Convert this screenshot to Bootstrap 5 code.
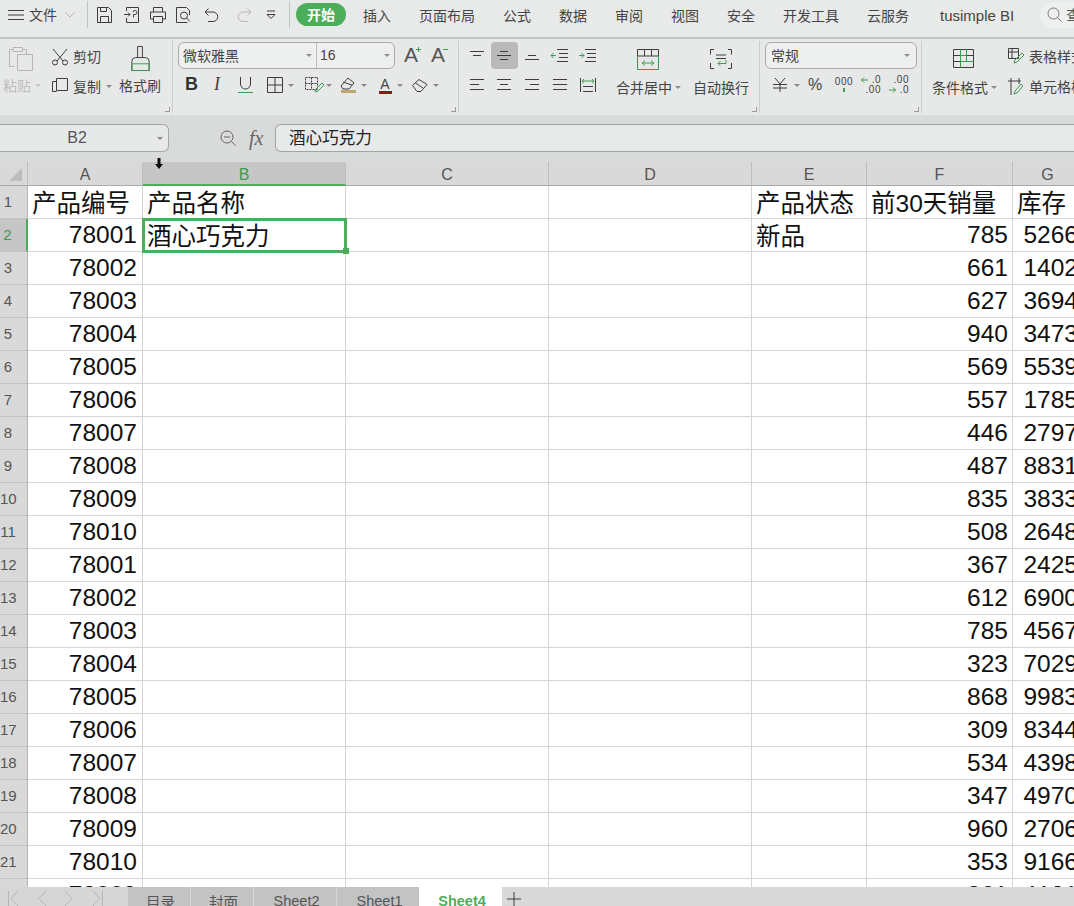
<!DOCTYPE html>
<html lang="zh-CN">
<head>
<meta charset="utf-8">
<title>WPS 表格</title>
<link href="https://cdn.jsdelivr.net/npm/bootstrap@5.3.0/dist/css/bootstrap.min.css" rel="stylesheet">
<style>
html,body{width:1074px;height:906px;overflow:hidden;margin:0}
body{background:#d9dada;color:#444;font-family:"Liberation Sans","Noto Sans CJK SC",sans-serif;font-size:14px;line-height:1.2}
.zh{font-family:"Noto Sans CJK SC","Liberation Sans",sans-serif}
svg{display:block;flex:none;overflow:visible}
svg .s{fill:none;stroke:#3d3d3d;stroke-width:1}
svg .g{fill:none;stroke:#3f9a52;stroke-width:1}
svg .l{fill:none;stroke:#b5b5b5;stroke-width:1}
.app{position:relative;width:1074px;height:906px}
.topbar{height:37px;background:#e8eaea;flex:none;padding-bottom:8px;overflow:hidden}
.topbar>*{flex:none}
.tb-rule{height:2px;background:#c4c5c5;flex:none}
.tb-sep{width:1px;height:27px;background:#c2c3c3;flex:none}
.file-lbl{font-size:14px;width:28px;white-space:nowrap;margin-left:5px}
.qa-ico{width:26.7px;justify-content:center}
.qa-box{padding-left:3px;width:201px}
.start-pill{width:50px;height:23px;border-radius:12px;background:#4cae5b;color:#fff;font-weight:700;font-size:14px;margin-left:6px;margin-right:3px}
.rtab{padding:2px 14px 0;font-size:14px;white-space:nowrap;color:#444}
.rtab.bi{font-family:"Liberation Sans",sans-serif;font-size:15px;padding:2px 14px 0 17px}
.srch{position:relative;width:48px;height:26px;margin-left:12px;background:#eef0f0;border-radius:13px 0 0 13px;padding-left:7px;overflow:hidden;font-size:14px;color:#555}
.ribbon{height:76px;background:#e7e9e9;flex:none;overflow:hidden;padding-top:2px}
.rgroup{position:relative;height:72px;flex:none;border-right:1px solid #cbcccc;display:flex}
.launch{position:absolute;right:2px;bottom:1px;width:5px;height:5px;border-right:1px solid #9a9a9a;border-bottom:1px solid #9a9a9a}
.crt{display:inline-block;width:0;height:0;border-left:3px solid transparent;border-right:3px solid transparent;border-top:3px solid #8a8a8a;flex:none}
.g-clip{width:173px}
.paste{width:53px;padding:5px 0 0 9px;color:#bdbdbd}
.paste-lbl{margin:6px 0 0 -6px;white-space:nowrap}
.cut{width:68px;padding-top:1px;margin-left:-1px}
.cut>div{height:29.5px;gap:5px;white-space:nowrap}
.brush{padding:5px 0 0 11px;width:52px}
.brush-lbl{margin:6px 0 0 -12px;white-space:nowrap}
.g-font{width:286px;padding:1px 0 0 5px;flex-direction:column}
.combo{height:27px;flex:none;background:#eef0f0;border:1px solid #a9a9a9;border-radius:6px;font-size:14px}
.font-box{width:217px}
.fname{width:138px;padding-left:4px;height:100%;border-right:1px solid #bdbdbd;position:relative}
.fsize{flex:1;padding-left:3px;position:relative}
.cbx{position:absolute;right:4px;top:11px}
.grow-a{left:231px;top:3px;gap:11px;font-size:21px;color:#555;line-height:1}
.font-row2{margin-top:3px;height:26px;padding-left:7px}
.fbtn{margin-right:7px}
.g-align{width:301px;padding:1px 0 0 4px}
.agrid{display:grid;grid-template-columns:repeat(5,27.75px);grid-auto-rows:29px;width:139px;flex:none}
.agrid>div{display:flex;align-items:center;justify-content:center;border-radius:4px;width:27px;height:27px}
.agrid>.on{background:#b9b9b9}
.bigbtn{flex:none;padding-top:7px}
.big-lbl{white-space:nowrap;display:flex;align-items:center;gap:3px}
.g-num{width:162px;padding:1px 0 0 5px;flex-direction:column}
.num-box{width:152px;padding-left:5px;position:relative}
.num-row{margin-top:3px;height:26px;padding-left:8px;color:#444}
.g-rest{padding:3px 0 0 10px;flex:none;border:0;width:160px}
.rest-side{margin-left:11px;margin-top:-2px;white-space:nowrap}
.rest-side>div{height:29.500px;gap:5px}
.fxbar{height:47px;padding-top:9px;flex:none;background:#d9dada}
.namebox{position:relative;width:169px;height:28px;background:#e7e9e9;border:1px solid #a4a5a5;border-radius:0 6px 6px 0;border-left:0;font-size:16px;color:#555;font-family:"Liberation Sans",sans-serif}
.fx-ic{width:106px;height:28px;padding-left:51px;gap:13px}
.fx-lbl{font-family:"Liberation Serif",serif;font-style:italic;font-size:20px;color:#666;line-height:1}
.fx-input{flex:1;height:28px;background:#e8eaea;border:1px solid #a4a5a5;border-right:0;border-radius:6px 0 0 6px;padding-left:13px;font-size:16.6px;color:#222}
.gridwrap{position:relative;flex:1 1 0;min-height:0;overflow:hidden;background:#fff}
.sheetgrid.table{table-layout:fixed;width:1083px;margin:0;border-collapse:separate;border-spacing:0;--bs-table-bg:#fff}
.sheetgrid.table>:not(caption)>*>*{padding:0 4px;border:0;border-right:1px solid #d5d5d5;border-bottom:1px solid #d5d5d5;box-shadow:none;height:33px;font-size:24.5px;line-height:32px;color:#111;white-space:nowrap;overflow:visible;vertical-align:middle}
.sheetgrid.table>thead>tr>th{height:24px;background:#d9d9d9;font-size:16px;font-weight:400;color:#555;line-height:20px;text-align:center;border-bottom:1px solid #a9a9a9;border-right:1px solid #bdbdbd;padding:3px 0 0}
.sheetgrid.table>thead>tr>th.cur{background:#c6c6c6;color:#3f9a52;border-bottom:2px solid #4cae5b;line-height:19px}
.sheetgrid.table>tbody>tr>th{background:#d9d9d9;font-size:15px;font-weight:400;color:#555;text-align:center;padding:0 11px 0 0;border-right:1px solid #b5b5b5;border-bottom:1px solid #c2c2c2;line-height:32px}
.sheetgrid.table>tbody>tr>th.cur{background:#c6c6c6;color:#3f9a52;border-right:2px solid #4cae5b}
.sheetgrid .num{text-align:right}
.sheetgrid.table>tbody>tr>td.num:nth-child(2){padding-right:5px}
.sheetgrid.table>tbody>tr>td.cj{padding-top:3px;line-height:29px}
.sheetgrid.table>tbody>tr>td.sel{position:relative;outline:3px solid #4cae5b;outline-offset:-2px}
.handle{position:absolute;right:-4px;bottom:-3px;width:6px;height:6px;background:#4cae5b;border:0}
.corner{position:absolute;left:9px;top:6px;width:0;height:0;border-left:13px solid transparent;border-bottom:13px solid #bdbdbd}
.cursor-ic{position:absolute;left:155px;top:158px}
.sheetbar{height:19px;background:#d9d9d9;flex:none;overflow:hidden;font-size:14.5px;color:#555}
.navarea{width:127px;background:#d6d6d6;height:100%;padding:3px 0 0 8px;gap:17.5px}
.stab{height:100%;background:#c3c3c3;border-left:1px solid #d6d6d6;padding-top:6px;padding-left:3px;text-align:center;white-space:nowrap}
.stab.t1{width:63px}
.stab.t2{width:83px}
.stab.act{background:#fff;width:83px;border-left:0;color:#4cae5b;font-weight:700}
.plus{width:24px;height:100%;padding:5px 0 0 5px}
</style>
</head>
<body>
<div class="app d-flex flex-column">

<!-- title/tab bar -->
<div class="topbar d-flex align-items-center">
  <svg class="ms-2" width="16" height="12" viewBox="0 0 16 12"><path class="s" d="M0 1.500h16M0 6h16M0 10.500h16"/></svg>
  <span class="file-lbl zh">文件</span>
  <svg style="margin-left:7px;margin-right:11px" width="12" height="7" viewBox="0 0 12 7"><path class="l" d="M1 1l5 5 5-5"/></svg>
  <span class="tb-sep"></span>
  <div class="qa-box d-flex align-items-center">
    <span class="qa-ico d-flex"><svg width="15" height="16" viewBox="0 0 15 16"><path class="s" d="M.5.5h11l3 3v12H.5zM3.500 15.500v-6h8v6M3.500.5v4h6v-4"/></svg></span>
    <span class="qa-ico d-flex"><svg width="15" height="16" viewBox="0 0 15 16"><path class="s" d="M2.500 4V.5h12v15h-12V11M0 7.500h6M4 5.500l2 2-2 2M9 5.200a2 2 0 1 1 2 2.300H9.500v3"/></svg></span>
    <span class="qa-ico d-flex"><svg width="16" height="16" viewBox="0 0 16 16"><path class="s" d="M3.500 5V.5h9V5M3.500 12H.5V5h15v7h-3M3.500 9.500h9v6h-9z"/></svg></span>
    <span class="qa-ico d-flex"><svg width="16" height="16" viewBox="0 0 16 16"><path class="s" d="M11.500 15.500H.5V.5h10l3 3V8"/><circle class="s" cx="8" cy="8.500" r="3.500"/><path class="s" d="M10.500 11l3.500 3.500"/></svg></span>
    <span class="qa-ico d-flex"><svg width="14" height="14" viewBox="0 0 14 14"><path class="s" d="M4.500.5L1 4l3.500 3.500M1 4h8a4.500 4.500 0 0 1 0 9.500H4"/></svg></span>
    <span class="qa-ico d-flex" style="margin-left:7px"><svg width="14" height="14" viewBox="0 0 14 14"><path class="l" d="M9.500.5L13 4 9.500 7.500M13 4H5a4.500 4.500 0 0 0 0 9.500h5"/></svg></span>
    <span class="qa-ico d-flex"><svg width="10" height="10" viewBox="0 0 10 10"><path class="s" d="M1 1h8"/><path class="s" d="M1 4.500l4 4 4-4z"/></svg></span>
  </div>
  <span class="tb-sep"></span>
  <span class="start-pill zh d-flex align-items-center justify-content-center">开始</span>
  <span class="rtab zh">插入</span>
  <span class="rtab zh">页面布局</span>
  <span class="rtab zh">公式</span>
  <span class="rtab zh">数据</span>
  <span class="rtab zh">审阅</span>
  <span class="rtab zh">视图</span>
  <span class="rtab zh">安全</span>
  <span class="rtab zh">开发工具</span>
  <span class="rtab zh">云服务</span>
  <span class="rtab bi">tusimple BI</span>
  <span class="srch zh d-flex align-items-center gap-1"><svg width="15" height="15" viewBox="0 0 15 15"><circle class="l" style="stroke:#777" cx="6.500" cy="6.500" r="5.500"/><path class="l" style="stroke:#777" d="M10.500 10.500l4 4"/></svg>查</span>
</div>
<div class="tb-rule"></div>

<!-- ribbon -->
<div class="ribbon d-flex">
  <div class="rgroup g-clip zh">
    <div class="paste">
      <svg width="24" height="25" viewBox="0 0 24 25"><path class="l" d="M5.500 20.500H.5V3.500h3M14 3.500h3.500V8M4 1.500h9.500v4H4zM8.500 8.500h15v16h-15z"/></svg>
      <div class="paste-lbl d-flex align-items-center gap-1">粘贴<span class="crt" style="border-top-color:#c4c4c4"></span></div>
    </div>
    <div class="cut">
      <div class="d-flex align-items-center"><svg width="16" height="18" viewBox="0 0 16 18"><path class="s" d="M1 1l10 12M15 1L5 13"/><circle class="s" cx="3" cy="14.500" r="2.500"/><circle class="s" cx="13" cy="14.500" r="2.500"/></svg><span>剪切</span></div>
      <div class="d-flex align-items-center"><svg width="16" height="17" viewBox="0 0 16 17"><path class="s" d="M4.500 13.500h-4V3.500h4M4.500.5h11v12h-11z"/></svg><span>复制</span><span class="crt"></span></div>
    </div>
    <div class="brush">
      <svg width="19" height="25" viewBox="0 0 19 26"><path class="s" d="M6.500 12V.5h5V12"/><path class="s" d="M.5 25.500V16q0-4 4-4h10q4 0 4 4v9.500z"/><path class="g" d="M.5 18.500h18M.5 25.500h18M.5 18.500v7M18.500 18.500v7"/></svg>
      <div class="brush-lbl">格式刷</div>
    </div>
    <span class="launch"></span>
  </div>

  <div class="rgroup g-font">
    <div class="combo font-box d-flex align-items-center zh">
      <div class="fname d-flex align-items-center">微软雅黑<span class="crt cbx"></span></div>
      <div class="fsize d-flex align-items-center h-100" style="font-family:'Liberation Sans',sans-serif">16<span class="crt cbx"></span></div>
    </div>
    <div class="grow-a d-flex align-items-center position-absolute">
      <span class="d-flex" style="width:16px">A<svg width="5" height="5" viewBox="0 0 5 5" style="margin-top:3px;margin-left:-2px"><path class="g" d="M0 2.500h5M2.500 0v5"/></svg></span>
      <span class="d-flex" style="width:16px">A<svg width="5" height="5" viewBox="0 0 5 5" style="margin-top:3px;margin-left:-2px"><path class="g" d="M0 2.500h5"/></svg></span>
    </div>
    <div class="font-row2 d-flex align-items-center">
      <span class="fbtn" style="font-family:'Liberation Sans',sans-serif;font-weight:700;font-size:18px;width:22px;color:#333">B</span>
      <span class="fbtn" style="font-family:'Liberation Serif',serif;font-style:italic;font-size:18px;width:17px;color:#444">I</span>
      <svg class="fbtn" style="margin-right:14px" width="15" height="16" viewBox="0 0 15 16"><path class="s" d="M2.500 0v7a5 5 0 0 0 10 0V0"/><path class="g" d="M0 15.500h15"/></svg>
      <svg width="16" height="16" viewBox="0 0 16 16"><path class="s" d="M.5.5h15v15H.5zM8 .5v15M.5 8h15"/></svg>
      <span class="crt" style="margin:0 11px 0 5px"></span>
      <svg width="19" height="17" viewBox="0 0 19 17"><path class="s" stroke-dasharray="2 1" d="M.5.500h12v12H.5zM6.500.5v12M.5 6.500h12"/><path class="g" d="M10 15l1-3 6-6 2 2-6 6z"/></svg>
      <span class="crt" style="margin:0 8px 0 2px"></span>
      <svg width="17" height="17" viewBox="0 0 17 17"><path class="s" d="M8 1l6 5-5 6H3L1 9zM3 5l9 3"/><rect x="1" y="13" width="15" height="3" fill="#bfa66f"/></svg>
      <span class="crt" style="margin:0 10px 0 4px"></span>
      <span class="d-flex flex-column align-items-center" style="width:16px;line-height:1"><span style="font-size:14px;font-family:'Liberation Sans',sans-serif">A</span><span style="width:13px;height:3px;background:#8b1a10;display:block"></span></span>
      <span class="crt" style="margin:0 9px 0 4px"></span>
      <svg width="16" height="13" viewBox="0 0 16 13"><path class="s" d="M.5 6.500L7 .5l8 5-6 7H5zM3.500 4l7.500 5"/></svg>
      <span class="crt" style="margin-left:5px"></span>
    </div>
    <span class="launch"></span>
  </div>

  <div class="rgroup g-align">
    <div class="agrid">
      <div><svg width="14" height="9" viewBox="0 0 14 9"><path class="s" d="M0 .5h14M3 4.500h8"/></svg></div>
      <div class="on"><svg width="14" height="9" viewBox="0 0 14 9"><path class="s" d="M3 .5h8M0 4.500h14M3 8.500h8"/></svg></div>
      <div><svg width="14" height="9" viewBox="0 0 14 9"><path class="s" d="M3 4.500h8M0 8.500h14"/></svg></div>
      <div><svg width="17" height="13" viewBox="0 0 17 13"><path class="s" d="M6 .5h11M8 4.500h9M8 8.500h9M6 12.500h11"/><path class="g" d="M0 6.500h5M2.500 4L0 6.500 2.500 9"/></svg></div>
      <div><svg width="17" height="13" viewBox="0 0 17 13"><path class="s" d="M6 .5h11M8 4.500h9M8 8.500h9M6 12.500h11"/><path class="g" d="M0 6.500h5M2.500 4L5 6.500 2.500 9"/></svg></div>
      <div><svg width="14" height="11" viewBox="0 0 14 11"><path class="s" d="M0 .5h14M0 5.500h9M0 10.500h14"/></svg></div>
      <div><svg width="14" height="11" viewBox="0 0 14 11"><path class="s" d="M0 .5h14M3 5.500h8M0 10.500h14"/></svg></div>
      <div><svg width="14" height="11" viewBox="0 0 14 11"><path class="s" d="M0 .5h14M5 5.500h9M0 10.500h14"/></svg></div>
      <div><svg width="14" height="11" viewBox="0 0 14 11"><path class="s" d="M0 .5h14M0 5.500h14M0 10.500h14"/></svg></div>
      <div><svg width="16" height="14" viewBox="0 0 16 14"><path class="s" d="M.5 0v14M15.500 0v14M3 8.500h10M3 13.500h10"/><path class="g" d="M2 3h12M2 3l2-2M2 3l2 2M14 3l-2-2M14 3l-2 2"/></svg></div>
    </div>
    <div class="bigbtn" style="margin-left:14px;width:77px">
      <svg style="margin-left:21px;margin-bottom:9px" width="22" height="21" viewBox="0 0 22 21"><path class="s" d="M.5 7V.5h21V7M.5 7h21M7.500.5V7M14.500.5V7"/><path class="g" d="M.5 7v13.500h21V7M5 14h12M5 14l3-2.500M5 14l3 2.500M17 14l-3-2.500M17 14l-3 2.500"/></svg>
      <div class="big-lbl zh">合并居中<span class="crt"></span></div>
    </div>
    <div class="bigbtn">
      <svg style="margin-left:17px;margin-bottom:10px" width="22" height="20" viewBox="0 0 22 20"><path class="s" d="M4 .5H.5v5M18 .5h3.500v5M.5 14v5.500H4M21.500 14v5.500H18M6 6h10M6 9.500h10"/><path class="g" d="M16 11v3.500H8M8 14.500l2.500-2.500M8 14.500l2.500 2.500"/></svg>
      <div class="big-lbl zh">自动换行</div>
    </div>
    <span class="launch"></span>
  </div>

  <div class="rgroup g-num">
    <div class="combo num-box d-flex align-items-center zh">常规<span class="crt cbx" style="right:6px"></span></div>
    <div class="num-row d-flex align-items-center">
      <svg width="14" height="14" viewBox="0 0 14 14"><path class="s" d="M2 0l5 6 5-6M0 6.500h14M0 10h14M7 6v8"/></svg>
      <span class="crt" style="margin:0 8px 0 7px"></span>
      <span style="font-size:16px;width:25px">%</span>
      <span class="d-flex flex-column align-items-center" style="font-size:10px;line-height:8px;width:24px;letter-spacing:.6px;margin-left:-1px">000<span style="width:2px;height:4px;background:#3f9a52;display:block;margin-top:2px"></span></span>
      <span class="d-flex flex-column align-items-end" style="font-size:10px;line-height:10px;width:17px;margin-left:8px;letter-spacing:.5px"><span class="d-flex align-items-center"><svg width="7" height="6" viewBox="0 0 7 6"><path class="g" d="M0 3h7M3 .5L.5 3 3 5.500"/></svg>&nbsp;.0</span><span>.00</span></span>
      <span class="d-flex flex-column align-items-end" style="font-size:10px;line-height:10px;width:17px;margin-left:11px;letter-spacing:.5px"><span>.00</span><span class="d-flex align-items-center"><svg width="7" height="6" viewBox="0 0 7 6"><path class="g" d="M0 3h7M4 .5L6.500 3 4 5.500"/></svg>&nbsp;.0</span></span>
    </div>
    <span class="launch"></span>
  </div>

  <div class="rgroup g-rest zh">
    <div class="bigbtn" style="padding-top:5px">
      <svg style="margin-left:21px;margin-bottom:11px" width="21" height="19" viewBox="0 0 21 19"><path class="s" d="M.5.5h20v18H.5zM.5 6.500h20M.5 12.500h20"/><path class="g" d="M7.500.5v18M13.500.5v6M7.500 6.500h6v6M7.500 12.500h13"/></svg>
      <div class="big-lbl">条件格式<span class="crt"></span></div>
    </div>
    <div class="rest-side">
      <div class="d-flex align-items-center"><svg width="16" height="17" viewBox="0 0 16 17"><path class="s" d="M.5.500h10v10H.5zM.5 4h10M4 .5v10"/><path class="g" d="M6 15l1-3 7-7 2 2-7 7z"/></svg><span>表格样式</span></div>
      <div class="d-flex align-items-center"><svg width="16" height="17" viewBox="0 0 16 17"><path class="s" d="M0 3h13M3 0v17M11 0v6"/><path class="g" d="M6 16l1-3 6-7 2 2-6 7z"/></svg><span>单元格样式</span></div>
    </div>
  </div>
</div>

<!-- formula bar -->
<div class="fxbar d-flex">
  <div class="namebox d-flex align-items-center justify-content-center" style="padding-right:14px">B2<span class="crt cbx" style="right:5px;top:12px"></span></div>
  <div class="fx-ic d-flex align-items-center">
    <svg width="16" height="16" viewBox="0 0 16 16"><circle cx="7" cy="7" r="6" fill="none" stroke="#666"/><path d="M11.500 11.500l4 4M4 7h6" fill="none" stroke="#666"/></svg>
    <span class="fx-lbl">fx</span>
  </div>
  <div class="fx-input zh d-flex align-items-center">酒心巧克力</div>
</div>

<!-- grid -->
<div class="gridwrap">
<table class="table sheetgrid">
<colgroup><col style="width:28px"><col style="width:115px"><col style="width:203px"><col style="width:203px"><col style="width:203px"><col style="width:115px"><col style="width:146px"><col style="width:70px"></colgroup>
<thead><tr><th></th><th>A</th><th class="cur">B</th><th>C</th><th>D</th><th>E</th><th>F</th><th>G</th></tr></thead>
<tbody>
<tr><th>1</th><td class="cj">产品编号</td><td class="cj">产品名称</td><td></td><td></td><td class="cj">产品状态</td><td class="cj">前30天销量</td><td class="cj">库存</td></tr>
<tr><th class="cur">2</th><td class="num">78001</td><td class="sel cj">酒心巧克力<span class="handle"></span></td><td></td><td></td><td class="cj">新品</td><td class="num">785</td><td class="num">5266</td></tr>
<tr><th>3</th><td class="num">78002</td><td></td><td></td><td></td><td></td><td class="num">661</td><td class="num">1402</td></tr>
<tr><th>4</th><td class="num">78003</td><td></td><td></td><td></td><td></td><td class="num">627</td><td class="num">3694</td></tr>
<tr><th>5</th><td class="num">78004</td><td></td><td></td><td></td><td></td><td class="num">940</td><td class="num">3473</td></tr>
<tr><th>6</th><td class="num">78005</td><td></td><td></td><td></td><td></td><td class="num">569</td><td class="num">5539</td></tr>
<tr><th>7</th><td class="num">78006</td><td></td><td></td><td></td><td></td><td class="num">557</td><td class="num">1785</td></tr>
<tr><th>8</th><td class="num">78007</td><td></td><td></td><td></td><td></td><td class="num">446</td><td class="num">2797</td></tr>
<tr><th>9</th><td class="num">78008</td><td></td><td></td><td></td><td></td><td class="num">487</td><td class="num">8831</td></tr>
<tr><th>10</th><td class="num">78009</td><td></td><td></td><td></td><td></td><td class="num">835</td><td class="num">3833</td></tr>
<tr><th>11</th><td class="num">78010</td><td></td><td></td><td></td><td></td><td class="num">508</td><td class="num">2648</td></tr>
<tr><th>12</th><td class="num">78001</td><td></td><td></td><td></td><td></td><td class="num">367</td><td class="num">2425</td></tr>
<tr><th>13</th><td class="num">78002</td><td></td><td></td><td></td><td></td><td class="num">612</td><td class="num">6900</td></tr>
<tr><th>14</th><td class="num">78003</td><td></td><td></td><td></td><td></td><td class="num">785</td><td class="num">4567</td></tr>
<tr><th>15</th><td class="num">78004</td><td></td><td></td><td></td><td></td><td class="num">323</td><td class="num">7029</td></tr>
<tr><th>16</th><td class="num">78005</td><td></td><td></td><td></td><td></td><td class="num">868</td><td class="num">9983</td></tr>
<tr><th>17</th><td class="num">78006</td><td></td><td></td><td></td><td></td><td class="num">309</td><td class="num">8344</td></tr>
<tr><th>18</th><td class="num">78007</td><td></td><td></td><td></td><td></td><td class="num">534</td><td class="num">4398</td></tr>
<tr><th>19</th><td class="num">78008</td><td></td><td></td><td></td><td></td><td class="num">347</td><td class="num">4970</td></tr>
<tr><th>20</th><td class="num">78009</td><td></td><td></td><td></td><td></td><td class="num">960</td><td class="num">2706</td></tr>
<tr><th>21</th><td class="num">78010</td><td></td><td></td><td></td><td></td><td class="num">353</td><td class="num">9166</td></tr>
<tr><th>22</th><td class="num">78009</td><td></td><td></td><td></td><td></td><td class="num">861</td><td class="num">1181</td></tr>
</tbody>
</table>
<span class="corner"></span>
</div>

<!-- sheet tabs -->
<div class="sheetbar d-flex">
  <div class="navarea d-flex align-items-start">
    <svg width="11" height="16" viewBox="0 0 11 16"><path class="l" d="M.5 1v15M10 1L3 8.500 10 16"/></svg>
    <svg width="10" height="16" viewBox="0 0 10 16"><path class="l" d="M9 1L2 8.500 9 16"/></svg>
    <svg width="10" height="16" viewBox="0 0 10 16"><path class="l" d="M1 1l7 7.500L1 16"/></svg>
    <svg width="11" height="16" viewBox="0 0 11 16"><path class="l" d="M10.500 1v15M1 1l7 7.500L1 16"/></svg>
  </div>
  <div class="stab t1 zh">目录</div>
  <div class="stab t1 zh">封面</div>
  <div class="stab t2">Sheet2</div>
  <div class="stab t2">Sheet1</div>
  <div class="stab act">Sheet4</div>
  <div class="plus"><svg width="14" height="14" viewBox="0 0 14 14"><path class="s" d="M0 7h14M7 0v14"/></svg></div>
</div>
<svg class="cursor-ic" width="8" height="11" viewBox="0 0 8 11"><path d="M2.500 0h3v6H8l-4 5-4-5h2.500z" fill="#111"/></svg>
</div>
<script src="https://cdn.jsdelivr.net/npm/bootstrap@5.3.0/dist/js/bootstrap.bundle.min.js"></script>
</body>
</html>
